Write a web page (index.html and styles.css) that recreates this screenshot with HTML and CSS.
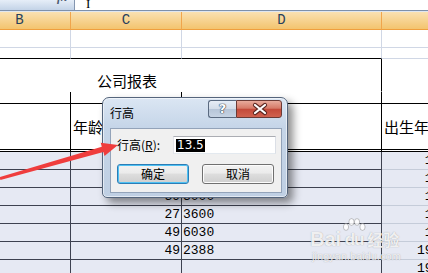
FILE: index.html
```html
<!DOCTYPE html>
<html lang="zh-CN">
<head>
    <meta charset="UTF-8">
    <meta name="viewport" content="width=device-width, initial-scale=1.0">
    <title>行高</title>
    <link rel="stylesheet" href="styles.css">
</head>
<body>
    <div class="screen">
        <div class="formula-bar">
            <div class="name-box"><span class="fx">fx</span></div>
            <div class="formula-input"><span class="caret">I</span></div>
        </div>

        <div class="sheet">
            <div class="row heads">
                <div class="cell col-a"></div>
                <div class="cell col-b">B</div>
                <div class="cell col-c">C</div>
                <div class="cell col-d">D</div>
                <div class="cell col-e">E</div>
            </div>
            <div class="row r-blank">
                <div class="cell col-a"></div>
                <div class="cell col-b"></div>
                <div class="cell col-c"></div>
                <div class="cell col-d"></div>
                <div class="cell col-e"></div>
            </div>
            <div class="row r-small">
                <div class="cell col-a"></div>
                <div class="cell col-b"></div>
                <div class="cell col-c"></div>
                <div class="cell col-d"></div>
                <div class="cell col-e"></div>
            </div>
            <div class="row r-title">
                <div class="cell merged">公司报表</div>
                <div class="cell col-e"></div>
            </div>
            <div class="row r-gap">
                <div class="cell col-a"></div>
                <div class="cell col-b"></div>
                <div class="cell col-c"></div>
                <div class="cell col-d"></div>
                <div class="cell col-e"></div>
            </div>
            <div class="row r-head">
                <div class="cell col-a"></div>
                <div class="cell col-b"></div>
                <div class="cell col-c">年龄</div>
                <div class="cell col-d">月薪</div>
                <div class="cell col-e">出生年月</div>
            </div>
            <div class="row r-data">
                <div class="cell col-a"></div>
                <div class="cell col-b"></div>
                <div class="cell col-c">28</div>
                <div class="cell col-d">5000</div>
                <div class="cell col-e">1985-3-12</div>
            </div>
            <div class="row r-data">
                <div class="cell col-a"></div>
                <div class="cell col-b"></div>
                <div class="cell col-c">35</div>
                <div class="cell col-d">4200</div>
                <div class="cell col-e">1978-6-20</div>
            </div>
            <div class="row r-data">
                <div class="cell col-a"></div>
                <div class="cell col-b"></div>
                <div class="cell col-c">39</div>
                <div class="cell col-d">3000</div>
                <div class="cell col-e">1974-2-15</div>
            </div>
            <div class="row r-data">
                <div class="cell col-a"></div>
                <div class="cell col-b"></div>
                <div class="cell col-c">27</div>
                <div class="cell col-d">3600</div>
                <div class="cell col-e">1986-9-11</div>
            </div>
            <div class="row r-data">
                <div class="cell col-a"></div>
                <div class="cell col-b"></div>
                <div class="cell col-c">49</div>
                <div class="cell col-d">6030</div>
                <div class="cell col-e">1964-5-27</div>
            </div>
            <div class="row r-data">
                <div class="cell col-a"></div>
                <div class="cell col-b"></div>
                <div class="cell col-c">49</div>
                <div class="cell col-d">2388</div>
                <div class="cell col-e">1964-10-21</div>
            </div>
            <div class="row r-data">
                <div class="cell col-a"></div>
                <div class="cell col-b"></div>
                <div class="cell col-c"></div>
                <div class="cell col-d"></div>
                <div class="cell col-e">1990-12-10</div>
            </div>
        </div>

        <div class="dialog">
            <div class="dlg-title">
                <span class="dlg-caption">行高</span>
                <div class="cap-btns">
                    <span class="cap-help">?</span>
                    <span class="cap-close">
                        <svg width="46" height="16" viewBox="0 0 46 16">
                            <path d="M18 4 L28 12 M28 4 L18 12" stroke="#5a2620" stroke-width="4.2" stroke-linecap="round"/>
                            <path d="M18 4 L28 12 M28 4 L18 12" stroke="#fff" stroke-width="2.2" stroke-linecap="round"/>
                        </svg>
                    </span>
                </div>
            </div>
            <div class="dlg-body">
                <div class="field">
                    <label class="field-label">行高(<u>R</u>):</label>
                    <div class="textbox"><span class="sel">13.5</span></div>
                </div>
                <div class="dlg-buttons">
                    <button class="btn btn-default">确定</button>
                    <button class="btn">取消</button>
                </div>
            </div>
        </div>

        <svg class="arrow" width="428" height="273" viewBox="0 0 428 273">
            <polygon points="-0.4,177 101.8,146.7 100.7,142.7 118,145 104.5,156.1 103.4,152.1 0.4,180" fill="#ef3d3d"/>
        </svg>

        <div class="watermark">
            <div class="wm-logo">
                <span class="wm-bai">Bai</span>
                <span class="wm-paw">
                    <svg width="24" height="13" viewBox="0 0 24 13">
                        <ellipse cx="4" cy="9" rx="2.6" ry="3.4"/>
                        <ellipse cx="9.5" cy="4" rx="2.6" ry="3.4"/>
                        <ellipse cx="15" cy="4" rx="2.6" ry="3.4"/>
                        <ellipse cx="20.5" cy="9" rx="2.6" ry="3.4"/>
                    </svg>
                    <span class="wm-du">du</span>
                </span>
                <span class="wm-jy">经验</span>
            </div>
            <div class="wm-url">jingyan.baidu.com</div>
        </div>
    </div>
</body>
</html>
```

FILE: styles.css
```css
body {
    margin: 0;
    background-color: #fff;
    font-family: "Noto Sans CJK SC", sans-serif;
}

.screen {
    position: relative;
    width: 428px;
    height: 273px;
    overflow: hidden;
}

/* formula bar strip */
.formula-bar {
    display: flex;
    height: 10px;
    border-bottom: 1px solid #7e90ab;
}

.name-box {
    width: 74px;
    border-right: 1px solid #8496b0;
    background: linear-gradient(#e6eef8, #c3d3e7);
    overflow: hidden;
}

.fx {
    display: block;
    margin: -9px 0 0 57px;
    font: italic bold 12px/12px "Liberation Serif", serif;
    color: #4d5b70;
}

.formula-input {
    flex: 1;
    overflow: hidden;
}

.caret {
    display: block;
    margin: -3px 0 0 11px;
    font: 13px/13px "Liberation Serif", serif;
    color: #000;
}

/* sheet grid */
.sheet {
    width: 629px;
    margin-left: -127px;
}

.row {
    display: flex;
}

.cell {
    flex: none;
    box-sizing: border-box;
    border-right: 1px solid #d0d7e5;
    border-bottom: 1px solid #d0d7e5;
    white-space: nowrap;
    overflow: hidden;
}

.col-a { width: 96px; }
.col-b { width: 102px; }
.col-c { width: 111px; }
.col-d { width: 200px; }
.col-e { width: 120px; }
.merged { width: 509px; }

.heads {
    border-top: 1px solid #dfe6f0;
}

.heads .cell {
    height: 18px;
    border-right-color: #f0a54c;
    border-bottom-color: #ef9f3e;
    background: linear-gradient(#fae1b2, #f3c46e);
    text-align: center;
    font: 14px/17px "Liberation Mono", monospace;
    color: #27405c;
}

.r-blank .cell {
    height: 18px;
}

.r-small .cell {
    height: 11px;
}

.r-small .cell:not(.col-e) {
    border-bottom-color: #000;
}

.r-title .cell {
    height: 33px;
    border-bottom-color: transparent;
}

.r-title .merged {
    display: flex;
    align-items: flex-end;
    justify-content: center;
    padding-bottom: 1px;
    border-right-color: #000;
    font-size: 15px;
    line-height: 18px;
}

.r-gap .cell {
    height: 12px;
    border-right-color: #000;
    border-bottom-color: #000;
}

.r-head .cell {
    display: flex;
    align-items: center;
    height: 48px;
    padding-left: 2px;
    border-right-color: #000;
    border-bottom: 3px double #000;
    font-size: 15px;
}

.r-gap .col-e,
.r-head .col-e {
    border-right-color: #d0d7e5;
}

.r-data .cell {
    height: 18px;
    background-color: #e6e9f3;
    border-right-color: #3e4250;
    border-bottom-color: #3e4250;
    font: 13px/17px "Liberation Mono", monospace;
    color: #000;
}

.r-data .col-c {
    text-align: right;
    padding-right: 1px;
}

.r-data .col-d {
    padding-left: 1px;
}

.r-data .col-e {
    text-align: right;
    padding-right: 6px;
    border-right-color: #c5ccd9;
    border-bottom-color: #c5ccd9;
}

/* row height dialog */
.dialog {
    position: absolute;
    left: 102px;
    top: 97px;
    width: 186px;
    height: 101px;
    box-sizing: border-box;
    display: flex;
    flex-direction: column;
    padding: 0 5px 4px 7px;
    border: 1px solid #55657c;
    border-radius: 7px 7px 5px 5px;
    background: linear-gradient(#dbe6f3, #c5d5e8 30%, #bfcfe3);
    box-shadow: inset 0 0 0 1px rgba(255, 255, 255, 0.55), 5px 5px 9px rgba(0, 0, 0, 0.45);
}

.dlg-title {
    display: flex;
    justify-content: space-between;
    height: 30px;
}

.dlg-caption {
    align-self: center;
    font-size: 12px;
    line-height: 14px;
    color: #000;
}

.cap-btns {
    display: flex;
    height: 18px;
    margin-top: 2px;
}

.cap-help,
.cap-close {
    box-sizing: border-box;
    height: 18px;
    border: 1px solid #5a6a80;
}

.cap-help {
    width: 28px;
    border-right: none;
    border-radius: 3px 0 0 3px;
    background: linear-gradient(#e6edf6, #d3dde9 48%, #b6c5d8 52%, #c6d3e3);
    text-align: center;
    font: bold 13px/16px "DejaVu Sans", sans-serif;
    color: #fff;
    text-shadow: 0 0 1px #2d3a4c, 0 0 1px #2d3a4c, 0 0 1px #2d3a4c;
}

.cap-close {
    width: 46px;
    border-color: #6b3a35;
    border-radius: 0 3px 3px 0;
    background: linear-gradient(#e8ab9c, #d67a68 45%, #c44a3a 52%, #d0624f);
}

.cap-close svg {
    display: block;
}

.dlg-body {
    flex: 1;
    padding: 7px 0 0 6px;
    border: 1px solid #93a3b9;
    background-color: #f0f0f0;
}

.field {
    display: flex;
    align-items: center;
    height: 18px;
}

.field-label {
    width: 56px;
    font-size: 12px;
    line-height: 14px;
    color: #000;
}

.textbox {
    box-sizing: border-box;
    display: flex;
    align-items: center;
    width: 103px;
    height: 18px;
    padding-left: 2px;
    border: 1px solid #abadb3;
    border-color: #abadb3 #dbdfe6 #e3e9ef #e2e3ea;
    background-color: #fff;
    font-size: 12px;
    line-height: 12px;
}

.sel {
    display: block;
    height: 13px;
    padding: 0 1px;
    background-color: #000;
    color: #fff;
    font: 12px/13px "DejaVu Sans", sans-serif;
}

.dlg-buttons {
    display: flex;
    gap: 13px;
    margin-top: 10px;
}

.btn {
    width: 72px;
    height: 20px;
    padding: 0;
    border: 1px solid #707070;
    border-radius: 3px;
    background: linear-gradient(#f2f2f2, #ebebeb 45%, #dddddd 50%, #cfcfcf);
    box-shadow: inset 0 0 0 1px #fcfcfc;
    font: 12px/16px "Noto Sans CJK SC", sans-serif;
    color: #000;
}

.btn-default {
    border-color: #2c7db6;
    box-shadow: inset 0 0 0 1px #4ec1f3;
}

/* red pointer arrow */
.arrow {
    position: absolute;
    left: 0;
    top: 0;
}

/* site watermark */
.watermark {
    position: absolute;
    left: 310px;
    top: 218px;
    color: rgba(255, 255, 255, 0.85);
    text-shadow: 0 0 1px rgba(90, 90, 90, 0.55);
}

.wm-logo {
    display: flex;
    align-items: flex-end;
}

.wm-bai {
    font: bold 20px/20px "Liberation Sans", sans-serif;
}

.wm-paw {
    display: flex;
    flex-direction: column;
    align-items: center;
    width: 24px;
    margin: 0 1px;
}

.wm-paw svg {
    fill: rgba(255, 255, 255, 0.85);
    stroke: rgba(110, 110, 110, 0.5);
    stroke-width: 0.8;
}

.wm-du {
    font: bold 17px/18px "Liberation Sans", sans-serif;
    letter-spacing: -1px;
}

.wm-jy {
    font: bold 16px/20px "Noto Sans CJK SC", sans-serif;
}

.wm-url {
    margin: 1px 0 0 2px;
    font: 11px/12px "Liberation Sans", sans-serif;
}
```
